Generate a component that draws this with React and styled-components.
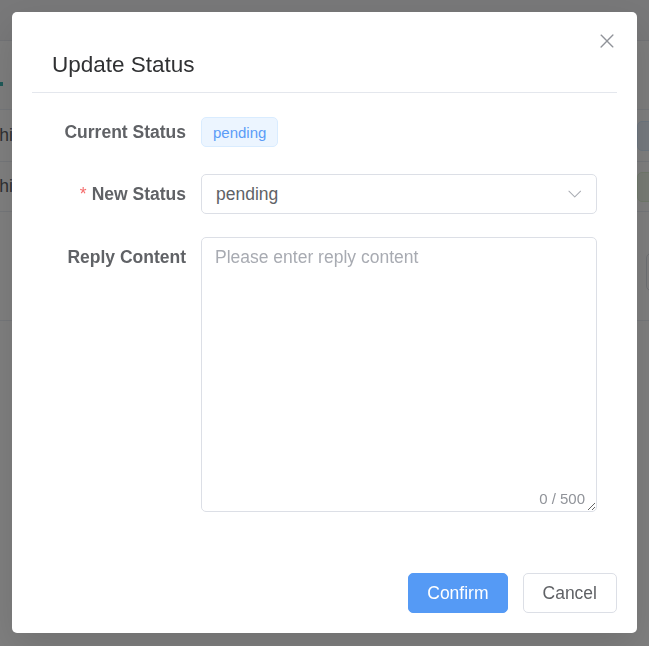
import React from 'react';
import styled, { createGlobalStyle } from 'styled-components';

const GlobalStyle = createGlobalStyle`
    html, body {
        margin: 0;
        padding: 0;
        background: #ffffff;
        font-family: "Liberation Sans", Arial, Helvetica, sans-serif;
    }
    * {
        box-sizing: border-box;
    }
`

const colors = {
    title: '#303133',
    text: '#606266',
    muted: '#909399',
    placeholder: '#a8abb2',
    border: '#dcdfe6',
    line: '#e4e7ed',
    primary: '#559af5',
    danger: '#f56c6c',
}

/* the page that sits dimmed behind the dialog */
const Page = styled.div`
    width: 649px;
    height: 646px;
    overflow: hidden;
    background: #ffffff;
`

const PageTop = styled.div`
    height: 41px;
    background: #f0f1f3;
    border-bottom: 1px solid #e4e7ed;
`

const TableRow = styled.div`
    height: ${props => props.height}px;
    display: flex;
    align-items: center;
    justify-content: space-between;
    border-bottom: 1px solid #ebeef5;
    background: ${props => props.head ? '#fafafa' : '#ffffff'};
`

const ClipCell = styled.div`
    width: 13px;
    overflow: hidden;
    display: flex;
    justify-content: flex-end;
    font-size: 17.5px;
    color: #606266;
    white-space: nowrap;
`

const TealMark = styled.div`
    width: 3px;
    height: 4px;
    margin-top: 18px;
    background: #3fb3b0;
`

const EdgeTag = styled.div`
    width: 20px;
    height: 30px;
    margin-right: -8px;
    border-radius: 5px;
    background: ${props => props.green ? '#f0f9eb' : '#ecf5ff'};
    border: 1px solid ${props => props.green ? '#e1f3d8' : '#d9ecff'};
`

const EdgeButton = styled.div`
    width: 20px;
    height: 38px;
    margin-top: 12px;
    margin-right: -17px;
    border-radius: 5px;
    border: 1px solid #dcdfe6;
`

/* dialog */
const Overlay = styled.div`
    position: fixed;
    inset: 0;
    background: rgba(0, 0, 0, 0.5);
    display: flex;
    justify-content: center;
    align-items: flex-start;
`

const Dialog = styled.div`
    position: relative;
    width: 625px;
    margin-top: 12px;
    padding: 20px 20px 20px;
    background: #ffffff;
    border-radius: 5px;
    box-shadow: 0 15px 40px rgba(0, 0, 0, 0.12);
`

const Header = styled.div`
    padding: 18px 20px 12px;
    border-bottom: 1px solid ${colors.line};
`

const Title = styled.span`
    font-size: 22.5px;
    line-height: 30px;
    color: ${colors.title};
`

const CloseButton = styled.button`
    position: absolute;
    top: 9px;
    right: 10px;
    width: 40px;
    height: 40px;
    padding: 0;
    border: none;
    background: transparent;
    display: flex;
    align-items: center;
    justify-content: center;
    color: ${colors.muted};
    cursor: pointer;
`

const Body = styled.div`
    padding: 19px 20px 0;
    display: flex;
    flex-direction: column;
`

const FormItem = styled.div`
    display: flex;
    align-items: flex-start;
    margin-bottom: ${props => props.gap || 0}px;
`

const Label = styled.label`
    width: 149px;
    flex-shrink: 0;
    padding-right: 15px;
    height: 40px;
    line-height: 40px;
    text-align: right;
    font-size: 17.5px;
    font-weight: 700;
    color: ${colors.text};
    white-space: nowrap;
`

const Required = styled.span`
    color: ${colors.danger};
    font-weight: 400;
    margin-right: 5px;
`

const Content = styled.div`
    flex: 1;
    min-height: 40px;
    display: flex;
    align-items: center;
    position: relative;
`

const Tag = styled.span`
    display: inline-flex;
    align-items: center;
    height: 30px;
    padding: 0 11px;
    font-size: 15px;
    color: #5b9cf7;
    background: #ecf5ff;
    border: 1px solid #d9ecff;
    border-radius: 5px;
`

const Select = styled.div`
    width: 100%;
    height: 40px;
    padding: 0 13px 0 14px;
    display: flex;
    align-items: center;
    justify-content: space-between;
    border: 1px solid ${colors.border};
    border-radius: 5px;
    font-size: 17.5px;
    color: ${colors.text};
    background: #ffffff;
`

const TextArea = styled.textarea`
    display: block;
    width: 100%;
    height: 275px;
    padding: 6px 13px;
    border: 1px solid ${colors.border};
    border-radius: 5px;
    font-family: inherit;
    font-size: 17.5px;
    line-height: 1.5;
    color: ${colors.text};
    resize: vertical;
    outline: none;

    &::placeholder {
        color: ${colors.placeholder};
    }
`

const Count = styled.span`
    position: absolute;
    right: 12px;
    bottom: 6px;
    font-size: 15px;
    line-height: 15px;
    color: ${colors.muted};
    background: #ffffff;
`

const Footer = styled.div`
    padding-top: 61px;
    display: flex;
    justify-content: flex-end;
    gap: 15px;
`

const Button = styled.button`
    height: 40px;
    padding: 0 ${props => props.primary ? 18 : 19}px;
    font-family: inherit;
    font-size: 17.5px;
    border-radius: 5px;
    cursor: pointer;
    color: ${props => props.primary ? '#ffffff' : colors.text};
    background: ${props => props.primary ? colors.primary : '#ffffff'};
    border: 1px solid ${props => props.primary ? colors.primary : colors.border};
`

const ArrowDown = () => (
    <svg width="17.5" height="17.5" viewBox="0 0 1024 1024" fill={colors.placeholder}>
        <path d="M831.872 340.864 512 652.672 192.128 340.864a30.592 30.592 0 0 0-42.752 0 29.12 29.12 0 0 0 0 41.6L489.664 714.24a32 32 0 0 0 44.672 0l340.288-331.712a29.12 29.12 0 0 0 0-41.728 30.592 30.592 0 0 0-42.752 0z"/>
    </svg>
)

const CloseIcon = () => (
    <svg width="22" height="22" viewBox="0 0 1024 1024" fill="currentColor">
        <path d="M764.288 214.592 512 466.88 259.712 214.592a31.936 31.936 0 0 0-45.12 45.12L466.752 512 214.528 764.224a31.936 31.936 0 1 0 45.12 45.184L512 557.184l252.288 252.288a31.936 31.936 0 0 0 45.12-45.12L557.12 512.064l252.288-252.352a31.936 31.936 0 1 0-45.12-45.184z"/>
    </svg>
)

const App = () => (
    <>
        <GlobalStyle/>
        <Page>
            <PageTop/>
            <TableRow height={69} head>
                <TealMark/>
            </TableRow>
            <TableRow height={52}>
                <ClipCell>Machi</ClipCell>
                <EdgeTag/>
            </TableRow>
            <TableRow height={50}>
                <ClipCell>Machi</ClipCell>
                <EdgeTag green/>
            </TableRow>
            <TableRow height={109}>
                <span/>
                <EdgeButton/>
            </TableRow>
        </Page>

        <Overlay>
            <Dialog>
                <Header>
                    <Title>Update Status</Title>
                </Header>
                <CloseButton aria-label="Close"><CloseIcon/></CloseButton>

                <Body>
                    <FormItem gap={22}>
                        <Label>Current Status</Label>
                        <Content>
                            <Tag>pending</Tag>
                        </Content>
                    </FormItem>
                    <FormItem gap={23}>
                        <Label><Required>*</Required>New Status</Label>
                        <Content>
                            <Select>
                                <span>pending</span>
                                <ArrowDown/>
                            </Select>
                        </Content>
                    </FormItem>
                    <FormItem>
                        <Label>Reply Content</Label>
                        <Content>
                            <TextArea placeholder="Please enter reply content" maxLength={500}/>
                            <Count>0 / 500</Count>
                        </Content>
                    </FormItem>
                </Body>

                <Footer>
                    <Button primary>Confirm</Button>
                    <Button>Cancel</Button>
                </Footer>
            </Dialog>
        </Overlay>
    </>
);

export default App;
